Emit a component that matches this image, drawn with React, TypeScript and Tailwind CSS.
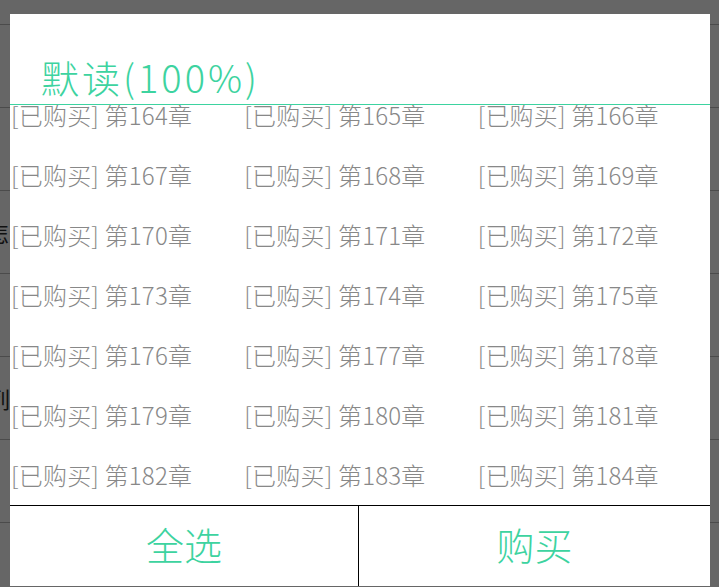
import React from "react";

const chapters = Array.from({ length: 21 }, (_, i) => 164 + i);

export default function App() {
  return (
    <div className="relative w-[719px] h-[587px] overflow-hidden bg-[#666666] font-['Noto_Sans_CJK_SC',sans-serif]">
      {/* background page under the overlay */}
      <div className="flex flex-col">
        <div className="h-[25px] border-b border-[#4b4b4b]" />
        <div className="h-[83px] border-b border-[#4b4b4b]" />
        <div className="h-[83px] border-b border-[#4b4b4b]" />
        <div className="h-[83px] border-b border-[#4b4b4b] flex items-center">
          <span className="ml-[-13px] text-[22px] text-[#111]">怎么</span>
        </div>
        <div className="h-[83px] border-b border-[#4b4b4b]" />
        <div className="h-[83px] border-b border-[#4b4b4b] flex items-center">
          <span className="ml-[-12px] text-[22px] text-[#111]">列表</span>
        </div>
        <div className="h-[83px] border-b border-[#4b4b4b]" />
        <div className="h-[83px] border-b border-[#4b4b4b]" />
      </div>

      {/* dialog */}
      <div className="absolute left-[10px] top-[14px] w-[700px] h-[572px] bg-white flex flex-col">
        <div className="h-[91px] shrink-0 border-b border-[#3dd3a0] flex items-end pb-[8px] pl-[31px]">
          <span className="text-[38px] leading-none font-light tracking-[3px] text-[#3dd3a0]">默读(100%)</span>
        </div>
        <div className="h-[400px] shrink-0 overflow-hidden">
          <div className="grid grid-cols-3 mt-[-20px]">
            {chapters.map((n) => (
              <div key={n} className="h-[60px] flex items-center pl-[1px]">
                <span className="text-[24px] leading-[22px] font-light tracking-[0.2px] text-[#888888] whitespace-nowrap">
                  [已购买] 第{n}章
                </span>
              </div>
            ))}
          </div>
        </div>
        <div className="h-[81px] shrink-0 border-t border-black flex">
          <div className="w-[349px] border-r border-black flex items-center justify-center pb-[4px]">
            <span className="text-[38px] leading-none font-light text-[#3dd3a0]">全选</span>
          </div>
          <div className="flex-1 flex items-center justify-center pb-[4px]">
            <span className="text-[38px] leading-none font-light text-[#3dd3a0]">购买</span>
          </div>
        </div>
      </div>
    </div>
  );
}
